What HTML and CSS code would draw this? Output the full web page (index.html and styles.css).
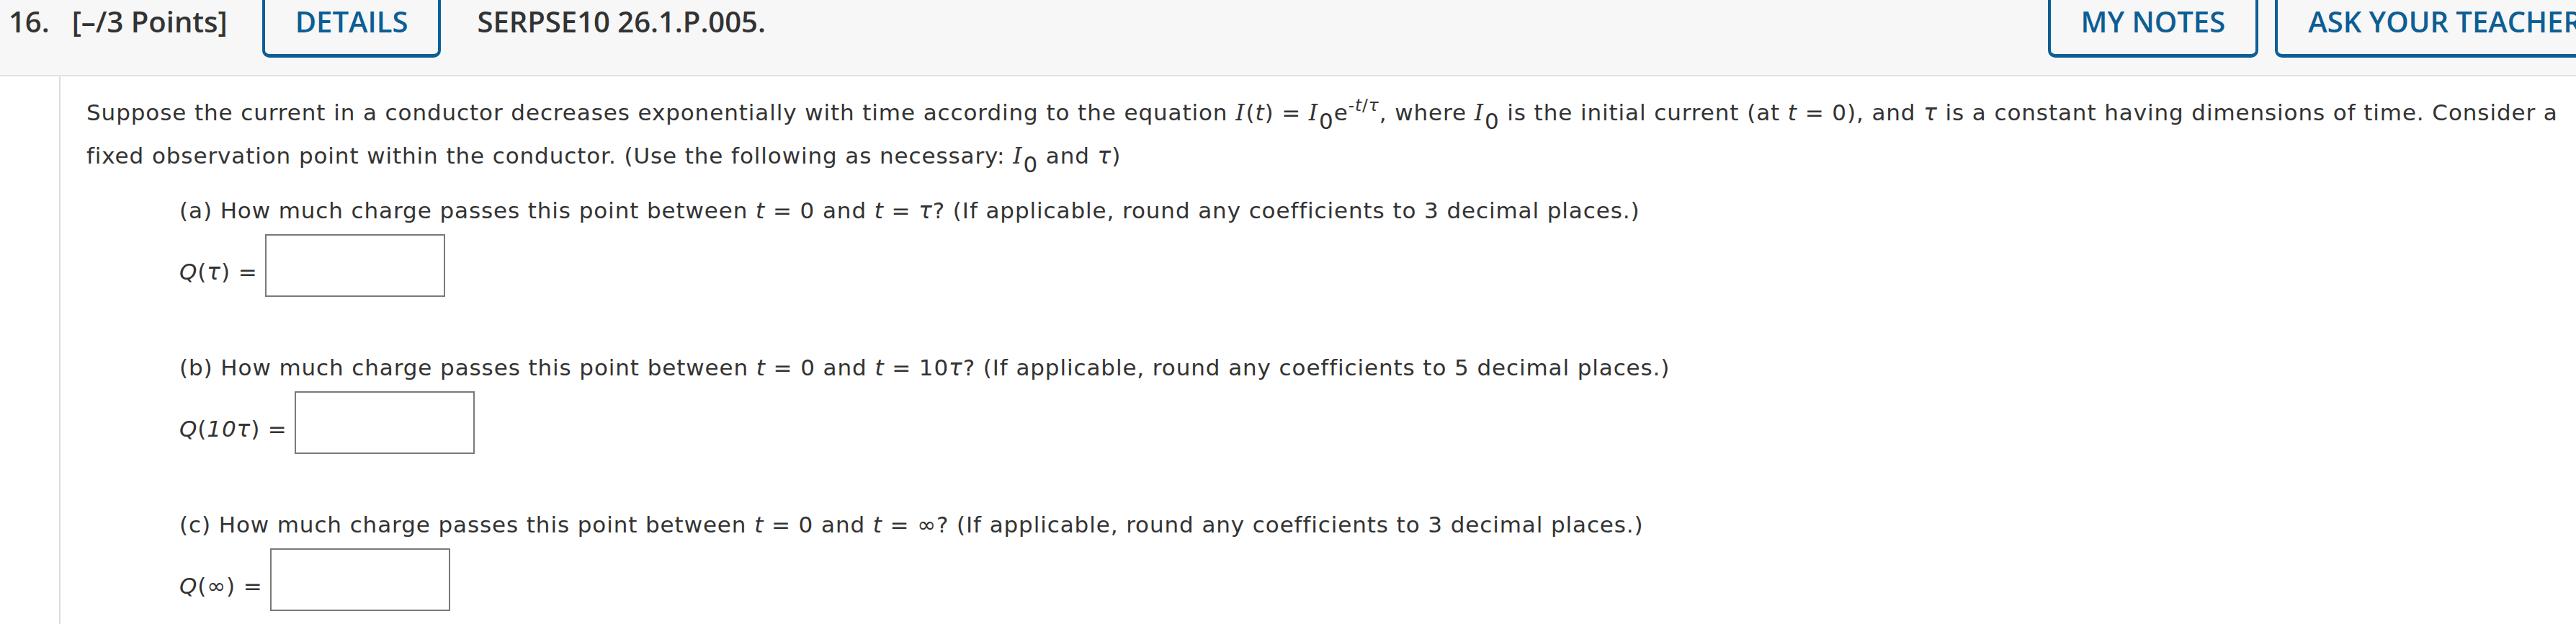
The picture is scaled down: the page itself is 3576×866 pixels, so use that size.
FILE: index.html
```html
<!DOCTYPE html>
<html lang="en">
<head>
<meta charset="utf-8">
<title>Question 16</title>
<link rel="stylesheet" href="styles.css">
</head>
<body>
<header class="qhead">
  <div class="qnum"><span class="num">16.</span><span>[–/3 Points]</span></div>
  <button class="tab tab-details" type="button">DETAILS</button>
  <div class="qcode">SERPSE10 26.1.P.005.</div>
  <div class="actions">
    <button class="tab" type="button">MY NOTES</button>
    <button class="tab" type="button">ASK YOUR TEACHER</button>
  </div>
</header>
<main class="qbody">
  <p class="stem">Suppose the current in a conductor decreases exponentially with time according to the equation <i class="cap">I</i>(<i>t</i>) = <i class="cap">I</i><sub>0</sub>e<sup>-<i>t</i>/<i>τ</i></sup>, where <i class="cap">I</i><sub>0</sub> is the initial current (at <i>t</i> = 0), and <i>τ</i> is a constant having dimensions of time. Consider a fixed observation point within the conductor. (Use the following as necessary: <i class="cap">I</i><sub>0</sub> and <i>τ</i>)</p>

  <div class="part">
    <p class="prompt">(a) How much charge passes this point between <i>t</i> = 0 and <i>t</i> = <i>τ</i>? (If applicable, round any coefficients to 3 decimal places.)</p>
    <div class="answer-row">
      <span class="lhs"><i>Q</i>(<i>τ</i>) =</span>
      <input class="answer" type="text" aria-label="Q(tau)">
    </div>
  </div>

  <div class="part">
    <p class="prompt">(b) How much charge passes this point between <i>t</i> = 0 and <i>t</i> = 10<i>τ</i>? (If applicable, round any coefficients to 5 decimal places.)</p>
    <div class="answer-row">
      <span class="lhs"><i>Q</i>(<i>10τ</i>) =</span>
      <input class="answer" type="text" aria-label="Q(10 tau)">
    </div>
  </div>

  <div class="part">
    <p class="prompt">(c) How much charge passes this point between <i>t</i> = 0 and <i>t</i> = ∞? (If applicable, round any coefficients to 3 decimal places.)</p>
    <div class="answer-row">
      <span class="lhs"><i>Q</i>(∞) =</span>
      <input class="answer" type="text" aria-label="Q(infinity)">
    </div>
  </div>
</main>
</body>
</html>
```
FILE: styles.css
```css
html, body {
  margin: 0;
  padding: 0;
  background: #ffffff;
  overflow: hidden;
}

.qhead {
  display: flex;
  align-items: flex-start;
  width: 3630px;
  height: 104px;
  background: #f7f7f7;
  border-bottom: 2px solid #e2e2e2;
  font-family: "Open Sans", "Liberation Sans", sans-serif;
  font-weight: 600;
  font-size: 40px;
  line-height: 55px;
  color: #333333;
}

.qnum {
  padding: 2px 0 0 12px;
  margin-right: 48px;
  white-space: nowrap;
}

.qnum .num {
  margin-right: 31px;
}

.qcode {
  padding-top: 2px;
  white-space: nowrap;
}

.tab {
  font: inherit;
  line-height: 55px;
  color: #0d5e94;
  background: transparent;
  border: 4px solid #0d5e94;
  border-top: none;
  border-bottom-width: 5px;
  border-radius: 0 0 10px 10px;
  padding: 2px 42px 18px;
  margin: 0;
  white-space: nowrap;
  cursor: pointer;
}

.tab-details {
  margin-right: 50px;
}

.actions {
  display: flex;
  gap: 23px;
  margin-left: auto;
}

.qbody {
  margin-left: 82px;
  border-left: 2px solid #dddddd;
  padding: 20px 20px 0 36px;
  min-height: 740px;
  font-family: "DejaVu Sans", Verdana, sans-serif;
  font-size: 31px;
  letter-spacing: 0.9px;
  line-height: 60px;
  color: #333333;
}

.qbody i {
  font-style: italic;
}

.qbody i.cap {
  font-family: "DejaVu Serif", "Liberation Serif", serif;
  letter-spacing: 0;
  margin-right: 2px;
}

.stem {
  margin: 0;
}

sub, sup {
  font-size: 100%;
  line-height: 0;
}

sub {
  vertical-align: -12px;
}

sup {
  font-size: 75%;
  vertical-align: 13px;
}

.part {
  margin: 16px 0 0 129px;
}

.part + .part {
  margin-top: 68px;
}

.prompt {
  margin: 0;
}

.answer-row {
  display: flex;
  align-items: flex-end;
  gap: 10px;
  margin-top: 3px;
}

.lhs {
  padding-bottom: 5px;
  white-space: nowrap;
}

.lhs i {
  font-style: italic;
}

.answer {
  box-sizing: border-box;
  width: 250px;
  height: 87px;
  border: 2px solid #7a7a7a;
  background: #ffffff;
  margin: 0;
  padding: 0 8px;
  font: inherit;
}
```
